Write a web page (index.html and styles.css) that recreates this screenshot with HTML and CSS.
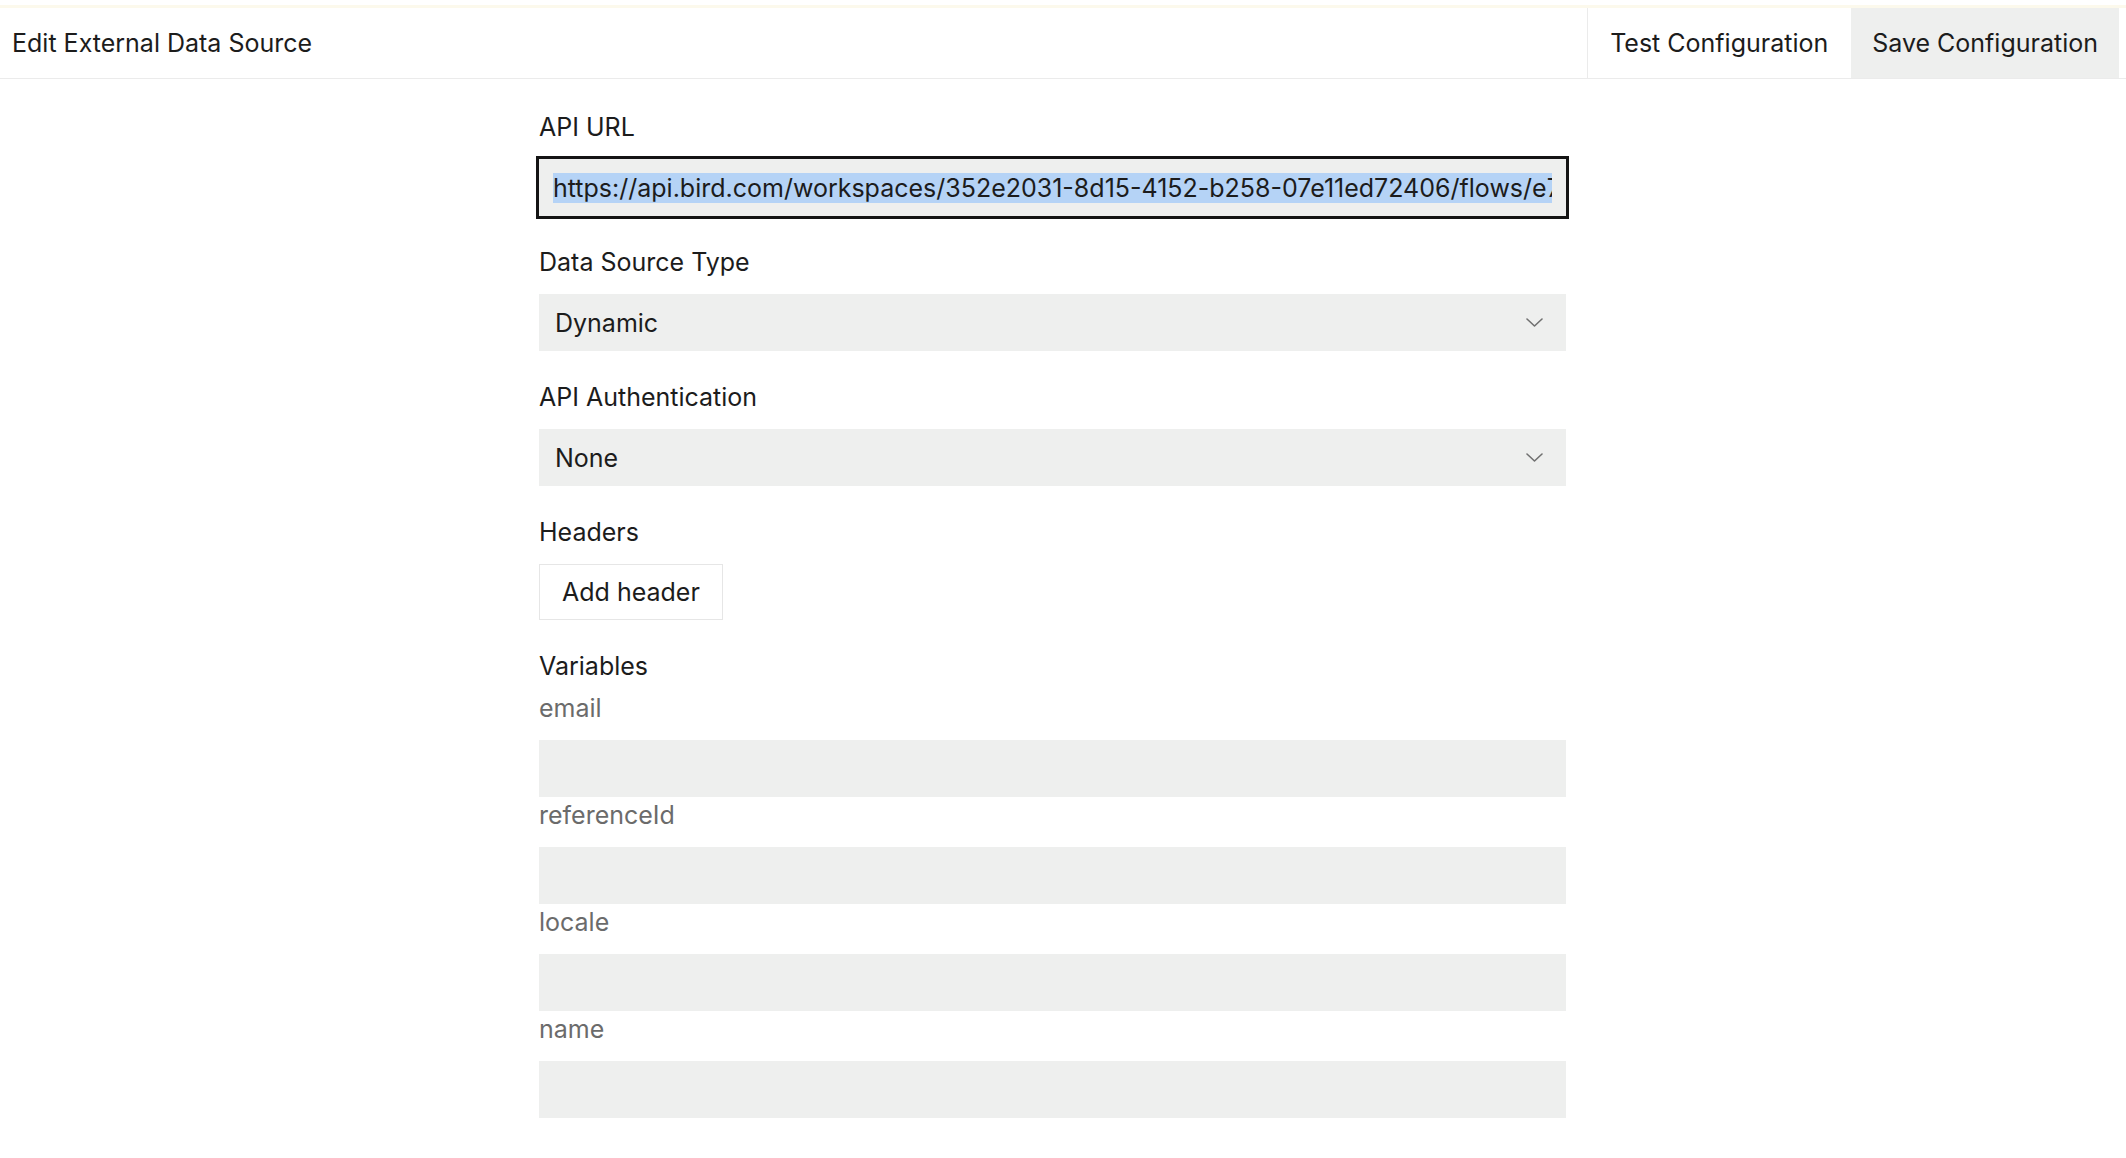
FILE: index.html
```html
<!DOCTYPE html>
<html lang="en">
<head>
    <meta charset="UTF-8">
    <meta name="viewport" content="width=device-width, initial-scale=1.0">
    <title>Edit External Data Source</title>
    <link rel="stylesheet" href="styles.css">
</head>
<body>
    <div class="topline"></div>
    <header class="toolbar">
        <div class="toolbar-title">Edit External Data Source</div>
        <div class="toolbar-actions">
            <button class="action">Test Configuration</button>
            <button class="action primary">Save Configuration</button>
        </div>
    </header>

    <main class="form">
        <div class="field">
            <label class="field-label">API URL</label>
            <div class="text-input focused">
                <div class="input-value">
                    <span class="selected">https://api.bird.com/workspaces/352e2031-8d15-4152-b258-07e11ed72406/flows/e7</span>
                </div>
            </div>
        </div>

        <div class="field">
            <label class="field-label">Data Source Type</label>
            <div class="select">
                <span>Dynamic</span>
                <svg class="chevron" width="17" height="9" viewBox="0 0 17 9"><path d="M1 1l7.5 7L16 1" fill="none" stroke="#707070" stroke-width="1.6" stroke-linecap="round" stroke-linejoin="round"/></svg>
            </div>
        </div>

        <div class="field">
            <label class="field-label">API Authentication</label>
            <div class="select">
                <span>None</span>
                <svg class="chevron" width="17" height="9" viewBox="0 0 17 9"><path d="M1 1l7.5 7L16 1" fill="none" stroke="#707070" stroke-width="1.6" stroke-linecap="round" stroke-linejoin="round"/></svg>
            </div>
        </div>

        <div class="field">
            <label class="field-label">Headers</label>
            <div><button class="add-btn">Add header</button></div>
        </div>

        <div class="variables">
            <div class="variables-title">Variables</div>
            <div class="var-field">
                <label class="var-label">email</label>
                <div class="text-input"></div>
            </div>
            <div class="var-field">
                <label class="var-label">referenceId</label>
                <div class="text-input"></div>
            </div>
            <div class="var-field">
                <label class="var-label">locale</label>
                <div class="text-input"></div>
            </div>
            <div class="var-field">
                <label class="var-label">name</label>
                <div class="text-input"></div>
            </div>
        </div>
    </main>
</body>
</html>
```

FILE: styles.css
```css
body {
    margin: 0;
    font-family: Inter, "Noto Sans", sans-serif;
    font-size: 25px;
    color: #1c1c1c;
    background: #fff;
}
.topline {
    margin-top: 5px;
    height: 3px;
    background: #fcf9ec;
}
.toolbar {
    display: flex;
    align-items: stretch;
    justify-content: space-between;
    height: 70px;
    border-bottom: 1px solid #ebebeb;
}
.toolbar-title {
    display: flex;
    align-items: center;
    padding-left: 12px;
}
.toolbar-actions {
    display: flex;
    margin-right: 7px;
}
.action {
    font: inherit;
    color: #1c1c1c;
    background: #fff;
    border: none;
    border-left: 1px solid #ebebeb;
    padding: 0 23px 0 22px;
    cursor: pointer;
}
.action.primary {
    background: #eeefee;
    border-left: none;
    padding: 0 21px;
}
.form {
    max-width: 1048px;
    margin: 0 auto;
    padding: 34px 21px 0 0;
    box-sizing: border-box;
}
.field {
    margin-bottom: 32px;
}
.field-label {
    display: block;
    line-height: 28px;
    margin-bottom: 18px;
}
.text-input {
    height: 57px;
    background: #eeefee;
    display: flex;
    align-items: center;
    padding: 0 14px;
}
.text-input.focused {
    outline: 3px solid #141414;
}
.input-value {
    flex: 1;
    overflow: hidden;
    white-space: nowrap;
}
.selected {
    background: #b5d3f6;
    line-height: 27px;
}
.select {
    height: 57px;
    background: #eeefee;
    display: flex;
    align-items: center;
    justify-content: space-between;
    padding: 0 23px 0 16px;
}
.add-btn {
    font: inherit;
    color: #1c1c1c;
    background: #fff;
    border: 1px solid #e6e6e6;
    height: 56px;
    padding: 0 22px;
    cursor: pointer;
}
.variables {
    margin-top: 8px;
}
.variables-title {
    line-height: 28px;
    margin-bottom: 14px;
}
.var-field {
    margin-bottom: 4px;
}
.var-label {
    display: block;
    color: #6b6b6b;
    line-height: 28px;
    margin-bottom: 18px;
}
```
